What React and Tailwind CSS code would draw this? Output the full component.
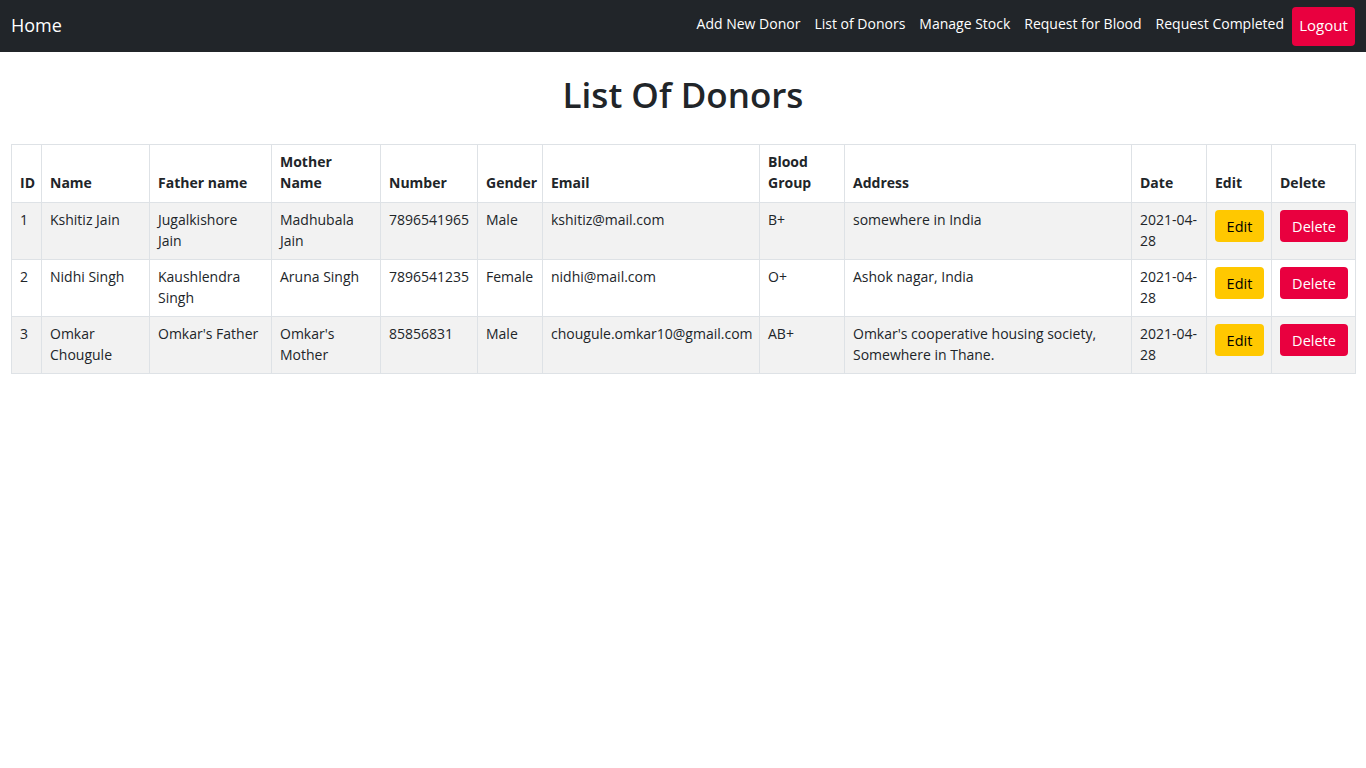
export default function App() {
  const rows = [
    ["1", "Kshitiz Jain", ["Jugalkishore", "Jain"], ["Madhubala", "Jain"], "7896541965", "Male", "kshitiz@mail.com", "B+", ["somewhere in India"], ["2021-04-", "28"]],
    ["2", "Nidhi Singh", ["Kaushlendra", "Singh"], ["Aruna Singh"], "7896541235", "Female", "nidhi@mail.com", "O+", ["Ashok nagar, India"], ["2021-04-", "28"]],
    ["3", ["Omkar", "Chougule"], ["Omkar's Father"], ["Omkar's", "Mother"], "85856831", "Male", "chougule.omkar10@gmail.com", "AB+", ["Omkar's cooperative housing society,", "Somewhere in Thane."], ["2021-04-", "28"]],
  ];
  const widths = [30, 108, 122, 109, 97, 65, 217, 85, 287, 75, 65, 84];
  const heads = [["ID"], ["Name"], ["Father name"], ["Mother", "Name"], ["Number"], ["Gender"], ["Email"], ["Blood", "Group"], ["Address"], ["Date"], ["Edit"], ["Delete"]];
  const lines = (v) =>
    Array.isArray(v)
      ? v.map((l, i) => (
          <span key={i} className="block whitespace-nowrap">
            {l}
          </span>
        ))
      : <span className="block whitespace-nowrap">{v}</span>;
  return (
    <div className="min-h-[768px] bg-white text-[#212529]" style={{ fontFamily: "'Open Sans', 'Noto Sans', sans-serif" }}>
      <nav className="h-[52px] bg-[#212529] flex items-center justify-between pl-[11px] pr-[11px]">
        <span className="text-white text-[18px] leading-none pb-[2px]">Home</span>
        <div className="flex items-center">
          {["Add New Donor", "List of Donors", "Manage Stock", "Request for Blood", "Request Completed"].map((t) => (
            <span key={t} className="text-white text-[14px] px-[7px] pb-[5px] whitespace-nowrap">
              {t}
            </span>
          ))}
          <button className="ml-[1px] h-[39px] w-[63px] rounded-[4px] bg-[#e9003f] text-white text-[15px] pb-[2px]">Logout</button>
        </div>
      </nav>
      <h1 className="text-center text-[35px] font-semibold leading-none mt-[25px] mb-[32px]">List Of Donors</h1>
      <div className="px-[11px]">
        <table className="table-fixed border-collapse w-[1344px] text-[14px] leading-[21px]">
          <colgroup>
            {widths.map((w, i) => (
              <col key={i} style={{ width: w }} />
            ))}
          </colgroup>
          <thead>
            <tr>
              {heads.map((h, i) => (
                <th key={i} className="border border-[#dee2e6] px-[8px] pt-[6px] pb-[9px] h-[57px] align-bottom text-left font-bold">
                  {lines(h)}
                </th>
              ))}
            </tr>
          </thead>
          <tbody>
            {rows.map((r, ri) => (
              <tr key={ri} className={ri % 2 === 0 ? "bg-[#f2f2f2]" : "bg-white"}>
                {r.map((c, ci) => (
                  <td key={ci} className="border border-[#dee2e6] px-[8px] pt-[6px] pb-[8px] h-[57px] align-top">
                    {lines(c)}
                  </td>
                ))}
                <td className="border border-[#dee2e6] px-[8px] pt-[7px] align-top">
                  <button className="h-[32px] w-[49px] rounded-[4px] bg-[#ffc800] text-black text-[14.5px]">Edit</button>
                </td>
                <td className="border border-[#dee2e6] px-[8px] pt-[7px] align-top">
                  <button className="h-[32px] w-[68px] rounded-[4px] bg-[#e9003f] text-white text-[14.5px]">Delete</button>
                </td>
              </tr>
            ))}
          </tbody>
        </table>
      </div>
    </div>
  );
}
